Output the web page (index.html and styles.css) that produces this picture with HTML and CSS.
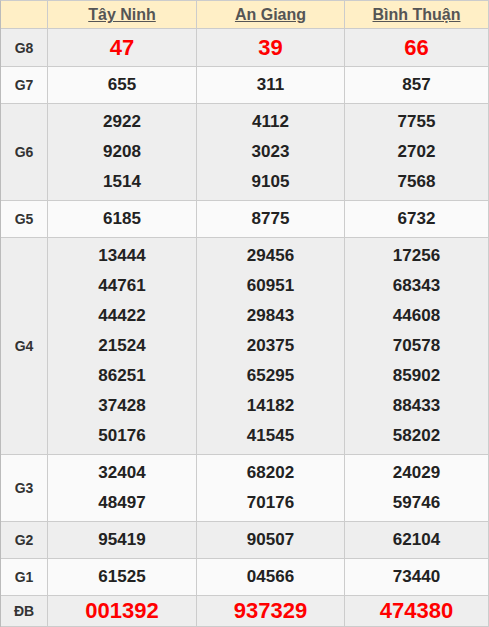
FILE: index.html
```html
<!DOCTYPE html>
<html lang="vi">
<head>
<meta charset="utf-8">
<title>Kết quả xổ số</title>
<link rel="stylesheet" href="styles.css">
</head>
<body>
<table class="kq">
  <colgroup>
    <col class="c-label">
    <col class="c-1">
    <col class="c-2">
    <col class="c-3">
  </colgroup>
  <thead>
    <tr class="head">
      <th></th>
      <th><a href="#">Tây Ninh</a></th>
      <th><a href="#">An Giang</a></th>
      <th><a href="#">Bình Thuận</a></th>
    </tr>
  </thead>
  <tbody>
    <tr class="odd big">
      <td class="lbl">G8</td>
      <td><div class="n red">47</div></td>
      <td><div class="n red">39</div></td>
      <td><div class="n red">66</div></td>
    </tr>
    <tr class="even">
      <td class="lbl">G7</td>
      <td><div class="n">655</div></td>
      <td><div class="n">311</div></td>
      <td><div class="n">857</div></td>
    </tr>
    <tr class="odd">
      <td class="lbl">G6</td>
      <td><div class="n">2922</div><div class="n">9208</div><div class="n">1514</div></td>
      <td><div class="n">4112</div><div class="n">3023</div><div class="n">9105</div></td>
      <td><div class="n">7755</div><div class="n">2702</div><div class="n">7568</div></td>
    </tr>
    <tr class="even">
      <td class="lbl">G5</td>
      <td><div class="n">6185</div></td>
      <td><div class="n">8775</div></td>
      <td><div class="n">6732</div></td>
    </tr>
    <tr class="odd">
      <td class="lbl">G4</td>
      <td><div class="n">13444</div><div class="n">44761</div><div class="n">44422</div><div class="n">21524</div><div class="n">86251</div><div class="n">37428</div><div class="n">50176</div></td>
      <td><div class="n">29456</div><div class="n">60951</div><div class="n">29843</div><div class="n">20375</div><div class="n">65295</div><div class="n">14182</div><div class="n">41545</div></td>
      <td><div class="n">17256</div><div class="n">68343</div><div class="n">44608</div><div class="n">70578</div><div class="n">85902</div><div class="n">88433</div><div class="n">58202</div></td>
    </tr>
    <tr class="even">
      <td class="lbl">G3</td>
      <td><div class="n">32404</div><div class="n">48497</div></td>
      <td><div class="n">68202</div><div class="n">70176</div></td>
      <td><div class="n">24029</div><div class="n">59746</div></td>
    </tr>
    <tr class="odd">
      <td class="lbl">G2</td>
      <td><div class="n">95419</div></td>
      <td><div class="n">90507</div></td>
      <td><div class="n">62104</div></td>
    </tr>
    <tr class="even">
      <td class="lbl">G1</td>
      <td><div class="n">61525</div></td>
      <td><div class="n">04566</div></td>
      <td><div class="n">73440</div></td>
    </tr>
    <tr class="odd db">
      <td class="lbl">ĐB</td>
      <td><div class="n red">001392</div></td>
      <td><div class="n red">937329</div></td>
      <td><div class="n red">474380</div></td>
    </tr>
  </tbody>
</table>
</body>
</html>
```

FILE: styles.css
```css
html, body {
  margin: 0;
  padding: 0;
  background: #ffffff;
}

.kq {
  border-collapse: separate;
  border-spacing: 0;
  table-layout: fixed;
  width: 489px;
  border-top: 1px solid #cccccc;
  border-left: 1px solid #bbbbbb;
  font-family: "Liberation Sans", Arial, sans-serif;
  font-weight: bold;
  color: #222222;
}

.c-label { width: 47px; }
.c-1 { width: 149px; }
.c-2 { width: 148px; }
.c-3 { width: 144px; }

.kq th,
.kq td {
  box-sizing: border-box;
  border-right: 1px solid #cccccc;
  border-bottom: 1px solid #cccccc;
  text-align: center;
  vertical-align: middle;
  padding: 3px 0;
}

.head th {
  background: #ffefc6;
  padding: 0;
  height: 28px;
  line-height: 27px;
  font-size: 16px;
}

.head a {
  color: #555555;
  text-decoration: underline;
}

.odd td { background: #eeeeee; }
.even td { background: #fafafa; }

.lbl {
  font-size: 14px;
  color: #333333;
}

.n {
  font-size: 17px;
  line-height: 30px;
}

.n.red {
  color: #ff0000;
  font-size: 22px;
}

.big .n { line-height: 31px; }

.db td { padding: 0; }
.db .n { line-height: 30px; }
```
